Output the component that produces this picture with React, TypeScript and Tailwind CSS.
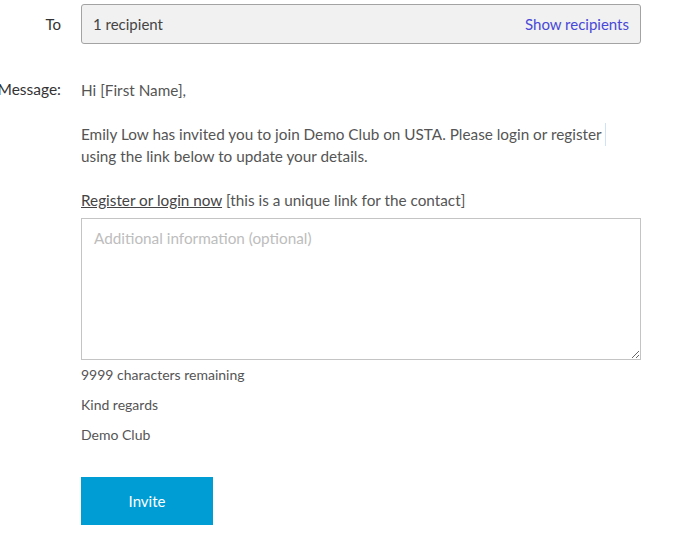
export default function App() {
  return (
    <div className="w-[683px] h-[534px] bg-white overflow-hidden font-['Lato','Liberation_Sans',sans-serif] text-[#555]">
      <div className="grid grid-cols-[61px_560px] gap-x-5 pt-1">
        {/* TO */}
        <div className="flex items-center justify-end h-10 text-[15px] text-[#333] whitespace-nowrap">To</div>
        <div className="h-10 flex items-center justify-between px-[11px] bg-[#f1f1f1] border border-[#a3a3a3] rounded-[3px] text-[15px]">
          <span className="text-[#444]">1 recipient</span>
          <a className="text-[#4848d8] cursor-pointer">Show recipients</a>
        </div>

        {/* MESSAGE */}
        <div className="mt-[35px] h-[22px] flex items-center justify-end text-[15.5px] text-[#333] whitespace-nowrap">Message:</div>
        <div className="mt-[35px] text-[14px] leading-[22px]">
          <div className="text-[15.3px]">
            <p>Hi [First Name],</p>
            <p className="mt-[22px]">
              Emily Low has invited you to join Demo Club on USTA. Please login or register
              <span className="relative">
                <span className="absolute left-[3px] -top-[2px] w-px h-[23px] bg-[#cfe3f7]"></span>
              </span>
              <br />
              using the link below to update your details.
            </p>
            <p className="mt-[22px]">
              <a className="underline text-[#444] cursor-pointer">Register or login now</a> [this is a unique link for the contact]
            </p>
          </div>
          <textarea
            placeholder="Additional information (optional)"
            className="mt-[7px] block w-full h-[142px] border border-[#c4c4c4] px-3 py-[8px] text-[15.3px] placeholder:text-[#bdbdbd] outline-none"
          />
          <p className="mt-[4px]">9999 characters remaining</p>
          <p className="mt-[8px]">Kind regards</p>
          <p className="mt-[8px]">Demo Club</p>
          <button className="mt-[31px] w-[132px] h-12 bg-[#009cd4] text-white text-[15px]">Invite</button>
        </div>
      </div>
    </div>
  );
}
